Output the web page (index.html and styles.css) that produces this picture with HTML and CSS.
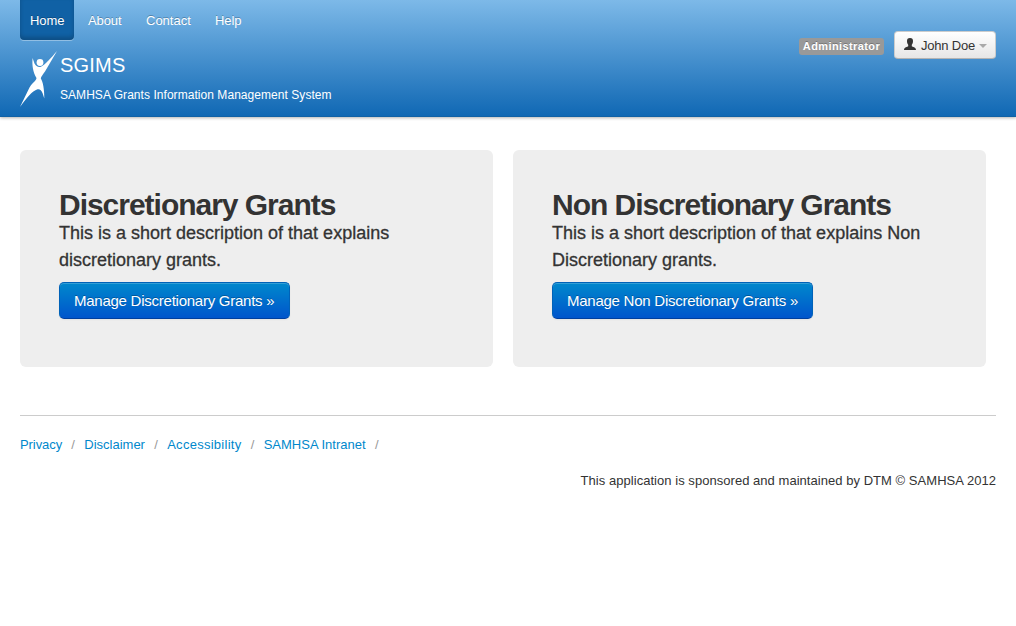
FILE: index.html
```html
<!DOCTYPE html>
<html lang="en">
<head>
<meta charset="utf-8">
<title>SGIMS</title>
<link rel="stylesheet" href="styles.css">
</head>
<body>
<header class="navbar">
  <div class="masthead">
    <nav class="nav">
      <a class="nav-link active" href="#">Home</a>
      <a class="nav-link about" href="#">About</a>
      <a class="nav-link contact" href="#">Contact</a>
      <a class="nav-link help" href="#">Help</a>
    </nav>
    <div class="brand">
      <svg class="logo" width="38" height="56" viewBox="0 0 38 56" fill="#fff">
        <circle cx="20" cy="11.500" r="3.400"/>
        <path d="M37 0L25 20.500C23 23.500 21 25.500 20.800 27.500C23 31 24.300 38 24.300 47.500L22.500 42C21.500 39 19.500 37.700 17.500 38.300C12 40 6.500 47.500 0 56L9.500 36.500C12.500 31.500 16.200 30 16.500 27C13 21.500 11.900 14 12.600 7L14.500 12.500C16 15.500 18.500 16.500 21 15.700C25 14 31 7 37 0Z"/>
      </svg>
      <div class="brand-text">
        <span class="brand-name">SGIMS</span>
        <span class="brand-tag">SAMHSA Grants Information Management System</span>
      </div>
    </div>
  </div>
  <div class="user">
    <span class="label">Administrator</span>
    <button class="user-button">
      <svg class="user-icon" width="12" height="12" viewBox="0 0 12 12" fill="#333"><path d="M6 0C8.200 0 9 1.200 9 3C9 4.700 8.500 6 7.800 6.700V8.300C8.500 9.200 12 9 12 12H0C0 9 3.500 9.200 4.200 8.300V6.700C3.500 6 3 4.700 3 3C3 1.200 3.800 0 6 0Z"/></svg>
      <span class="user-name">John Doe</span>
      <span class="caret"></span>
    </button>
  </div>
</header>
<main class="cards">
  <section class="card">
    <h1 class="card-title">Discretionary Grants</h1>
    <p class="card-text">This is a short description of that explains discretionary grants.</p>
    <a class="button first" href="#">Manage Discretionary Grants »</a>
  </section>
  <section class="card">
    <h1 class="card-title">Non Discretionary Grants</h1>
    <p class="card-text">This is a short description of that explains Non Discretionary grants.</p>
    <a class="button second" href="#">Manage Non Discretionary Grants »</a>
  </section>
</main>
<footer class="footer">
  <ul class="links">
    <li class="link-item privacy"><a class="link" href="#">Privacy</a><span class="divider">/</span></li>
    <li class="link-item"><a class="link" href="#">Disclaimer</a><span class="divider">/</span></li>
    <li class="link-item accessibility"><a class="link" href="#">Accessibility</a><span class="divider">/</span></li>
    <li class="link-item"><a class="link" href="#">SAMHSA Intranet</a><span class="divider">/</span></li>
  </ul>
  <p class="credit">This application is sponsored and maintained by DTM © SAMHSA 2012</p>
</footer>
</body>
</html>
```
FILE: styles.css
```css
* { box-sizing: border-box; }
body {
  margin: 0;
  background: #fff;
  color: #333;
  font: 13px/18px "Liberation Sans", Arial, sans-serif;
}
a { text-decoration: none; }

.navbar {
  display: flex;
  justify-content: space-between;
  height: 117px;
  padding: 0 20px;
  background: linear-gradient(#7db9e8, #1068b4);
  border-bottom: 1px solid #1061a5;
  box-shadow: 0 1px 3px rgba(0, 0, 0, .3);
}
.nav { display: flex; height: 40px; }
.nav-link {
  height: 40px;
  padding: 12px 10px 10px;
  color: #fff;
  letter-spacing: -.1px;
  text-shadow: 0 -1px 0 rgba(0, 0, 0, .25);
}
.active {
  width: 54px;
  margin-right: 4px;
  background: #1061a5;
  border-radius: 0 0 4px 4px;
  box-shadow: inset 0 -3px 4px rgba(0, 0, 0, .2), 0 1px 0 rgba(255, 255, 255, .35);
}
.about { width: 58px; }
.contact { width: 69px; letter-spacing: 0; }
.brand { display: flex; padding-top: 11px; gap: 2px; color: #fff; }
.brand-text { display: flex; flex-direction: column; }
.brand-name { font-size: 20px; line-height: 28px; letter-spacing: .2px; }
.brand-tag { margin-top: 7px; font-size: 12px; letter-spacing: .05px; white-space: nowrap; }

.user { display: flex; align-items: flex-start; gap: 10px; padding-top: 31px; }
.label {
  width: 85px;
  height: 17px;
  margin-top: 7px;
  background: #999;
  border-radius: 3px;
  color: #fff;
  font-size: 11px;
  font-weight: bold;
  letter-spacing: .4px;
  line-height: 16px;
  text-align: center;
  text-shadow: 0 -1px 0 rgba(0, 0, 0, .25);
}
.user-button {
  display: flex;
  align-items: center;
  width: 102px;
  height: 28px;
  padding: 1px 8px 0 9px;
  background: linear-gradient(#fff, #e6e6e6);
  border: 1px solid #ccc;
  border-bottom-color: #b3b3b3;
  border-radius: 4px;
  color: #333;
  font: 13px/18px "Liberation Sans", Arial, sans-serif;
}
.user-icon { margin-bottom: 3px; }
.user-name { margin-left: 5px; letter-spacing: -.2px; white-space: nowrap; }
.caret {
  margin-left: auto;
  border: 4px solid transparent;
  border-top-color: #a9a9a9;
  border-bottom: 0;
}

.cards { display: flex; gap: 20px; padding: 33px 20px 0; }
.card {
  width: 473px;
  height: 217px;
  padding: 39px;
  background: #eee;
  border-radius: 6px;
}
.card-title {
  margin: 0;
  font-size: 30px;
  line-height: 31px;
  letter-spacing: -1.02px;
  white-space: nowrap;
}
.card-text {
  margin: 0 0 8px;
  font-size: 18px;
  line-height: 27px;
  -webkit-text-stroke: .3px #333;
}
.button {
  display: block;
  height: 37px;
  padding: 9px 14px;
  background: linear-gradient(#08c, #05c);
  border: 1px solid #0062b8;
  border-bottom-color: #003f9e;
  border-radius: 5px;
  box-shadow: inset 0 1px 0 rgba(255, 255, 255, .2), 0 1px 2px rgba(0, 0, 0, .05);
  color: #fff;
  font-size: 15px;
  letter-spacing: -.25px;
  text-shadow: 0 -1px 0 rgba(0, 0, 0, .25);
  white-space: nowrap;
}
.first { width: 231px; }
.second { width: 261px; }

.footer { margin: 48px 20px 0; padding-top: 20px; border-top: 1px solid #ccc; }
.links { display: flex; margin: 0; padding: 0; list-style: none; }
.link { color: #08c; }
.privacy .link { letter-spacing: -.08px; }
.accessibility .link { letter-spacing: .27px; }
.divider { padding: 0 9.300px; color: #999; }
.credit { margin: 18px 0 0; letter-spacing: .04px; text-align: right; }
```
